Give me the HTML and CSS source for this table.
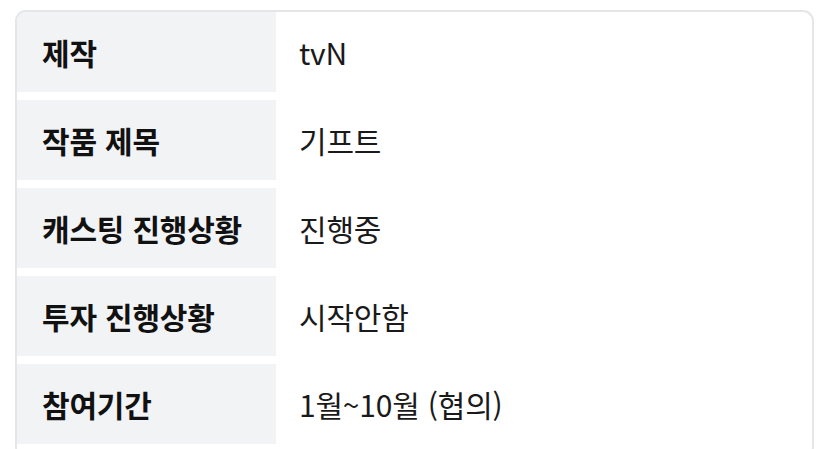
FILE: index.html
```html
<!DOCTYPE html>
<html lang="ko">
<head>
<meta charset="utf-8">
<link rel="stylesheet" href="styles.css">
</head>
<body>
<div class="card">
  <div class="row"><div class="label">제작</div><div class="value">tvN</div></div>
  <div class="row"><div class="label">작품 제목</div><div class="value">기프트</div></div>
  <div class="row"><div class="label">캐스팅 진행상황</div><div class="value">진행중</div></div>
  <div class="row"><div class="label">투자 진행상황</div><div class="value">시작안함</div></div>
  <div class="row"><div class="label">참여기간</div><div class="value">1월~10월 (협의)</div></div>
</div>
</body>
</html>
```
FILE: styles.css
```css
html, body {
  margin: 0;
  padding: 0;
  background: #ffffff;
}
html {
  height: 449px;
  overflow: hidden;
}
body {
  padding: 10px 15px 0 15px;
  font-family: "Noto Sans CJK KR", "Noto Sans", sans-serif;
  height: 449px;
  overflow: hidden;
  box-sizing: border-box;
}
.card {
  width: 799px;
  border: 2px solid #e6e6e8;
  border-radius: 11px;
  overflow: hidden;
  display: flex;
  flex-direction: column;
  gap: 8px;
  padding-bottom: 12px;
  box-sizing: border-box;
}
.row {
  display: flex;
  height: 80px;
  flex-shrink: 0;
}
.label {
  width: 259px;
  flex-shrink: 0;
  background: #f2f3f5;
  display: flex;
  align-items: center;
  padding-left: 25px;
  box-sizing: border-box;
  font-size: 30px;
  font-weight: 700;
  color: #111111;
  letter-spacing: -0.2px;
}
.value {
  flex: 1;
  display: flex;
  align-items: center;
  padding-left: 23px;
  font-size: 30px;
  font-weight: 400;
  color: #1a1a1a;
  letter-spacing: -0.2px;
}
```
